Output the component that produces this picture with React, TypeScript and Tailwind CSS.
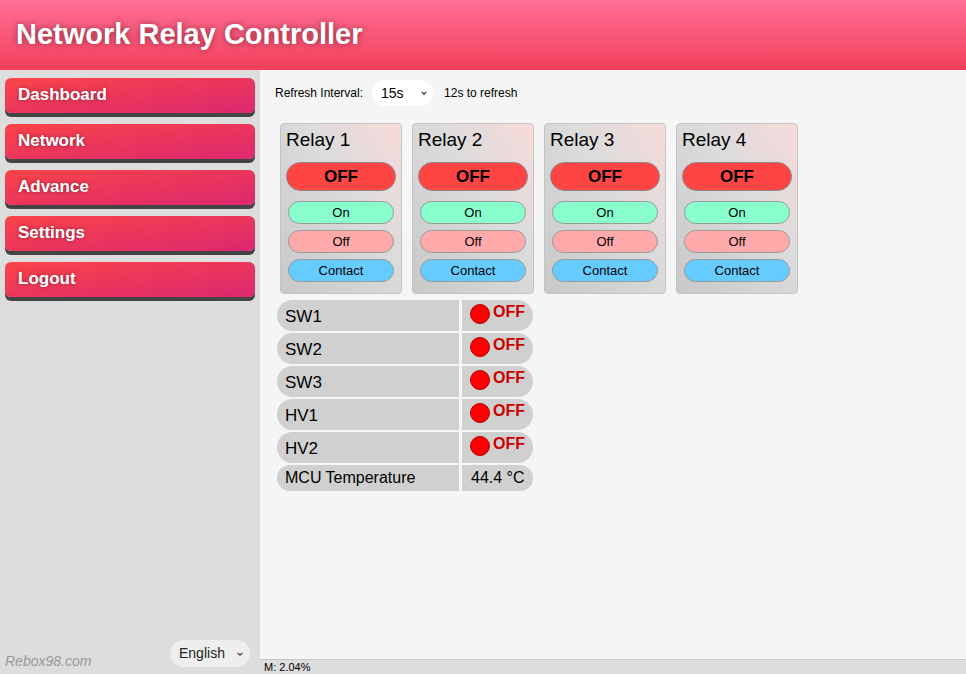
import React from "react";

const navItems = ["Dashboard", "Network", "Advance", "Settings", "Logout"];
const relays = ["Relay 1", "Relay 2", "Relay 3", "Relay 4"];
const inputs = ["SW1", "SW2", "SW3", "HV1", "HV2"];

const Chevron = () => (
  <svg width="8" height="8" viewBox="0 0 10 10" className="ml-auto">
    <path d="M2 3.5 L5 6.5 L8 3.5" fill="none" stroke="#333" strokeWidth="1.4" />
  </svg>
);

const RelayCard = ({ name }: { name: string }) => (
  <div className="w-[122px] h-[171px] rounded-[4px] border border-[#c4c4c4] bg-[linear-gradient(to_bottom_left,#f8dada_0%,#dcdcdc_40%,#c8c8c8_100%)] px-[5px] pt-[2px] flex flex-col">
    <div className="text-[19px] leading-[28px] text-black">{name}</div>
    <button className="mt-[8px] h-[29px] w-[110px] rounded-full border border-[#888] bg-[#ff4444] text-[17px] font-bold text-black">
      OFF
    </button>
    <div className="mt-[10px] flex flex-col gap-[6px] items-center">
      <button className="h-[23px] w-[106px] rounded-full border border-[#999] bg-[#88ffcc] text-[13px]">On</button>
      <button className="h-[23px] w-[106px] rounded-full border border-[#999] bg-[#ffaaaa] text-[13px]">Off</button>
      <button className="h-[23px] w-[106px] rounded-full border border-[#999] bg-[#66ccff] text-[13px]">Contact</button>
    </div>
  </div>
);

export default function App() {
  return (
    <div className="h-[674px] flex flex-col font-['Liberation_Sans',Arial,sans-serif] text-black overflow-hidden">
      <header className="h-[70px] shrink-0 bg-[linear-gradient(to_bottom,#ff6e97,#f2405a)] flex items-center pl-[16px]">
        <h1 className="text-[29px] font-bold text-white [text-shadow:0_0_6px_rgba(0,0,0,0.45)]">
          Network Relay Controller
        </h1>
      </header>

      <div className="flex flex-1 min-h-0">
        <aside className="w-[260px] shrink-0 bg-[#dddddd] flex flex-col px-[5px] pt-[8px]">
          <nav className="flex flex-col gap-[11px]">
            {navItems.map((item) => (
              <div
                key={item}
                className="h-[35px] rounded-[6px] bg-[linear-gradient(to_bottom_right,#fa4448,#dc2870)] shadow-[0_4px_0_#444] pl-[13px] pb-[2px] flex items-center text-[17px] font-bold text-white [text-shadow:0_0_4px_rgba(0,0,0,0.4)]"
              >
                {item}
              </div>
            ))}
          </nav>
          <div className="mt-auto flex items-end justify-between pb-[5px]">
            <span className="text-[14px] leading-[16px] italic text-[#999]">Rebox98.com</span>
            <div className="w-[80px] h-[27px] mb-[2px] mr-[5px] rounded-full bg-[#eeeeee] flex items-center pl-[9px] pr-[6px] text-[14px] text-[#222]">
              English
              <Chevron />
            </div>
          </div>
        </aside>

        <main className="flex-1 bg-[#f5f5f5] flex flex-col">
          <div className="flex-1 pl-[15px] pt-[10px]">
            <div className="flex items-center text-[12px]">
              <span>Refresh Interval:</span>
              <div className="ml-[9px] w-[61px] h-[26px] rounded-full bg-white flex items-center pl-[9px] pr-[5px] text-[14px]">
                15s
                <Chevron />
              </div>
              <span className="ml-[11px]">12s to refresh</span>
            </div>

            <div className="mt-[17px] ml-[5px] flex gap-[10px]">
              {relays.map((r) => (
                <RelayCard key={r} name={r} />
              ))}
            </div>

            <div className="mt-[6px] ml-[2px] flex flex-col gap-[2px] w-[256px]">
              {inputs.map((name) => (
                <div key={name} className="flex gap-[3px] h-[31px]">
                  <div className="w-[182px] rounded-l-full bg-[#d0d0d0] pl-[8px] flex items-center text-[17px] pt-[2px]">
                    {name}
                  </div>
                  <div className="flex-1 rounded-r-full bg-[#d0d0d0] flex items-start pl-[8px] pt-[3px]">
                    <span className="mt-[1px] w-[20px] h-[20px] rounded-full bg-[#ff0000] border border-[#b00000]" />
                    <span className="ml-[3px] text-[16px] font-bold text-[#cc0000] leading-[18px]">OFF</span>
                  </div>
                </div>
              ))}
              <div className="flex gap-[3px] h-[26px]">
                <div className="w-[182px] rounded-l-full bg-[#d0d0d0] pl-[8px] flex items-center text-[16px]">
                  MCU Temperature
                </div>
                <div className="flex-1 rounded-r-full bg-[#d0d0d0] flex items-center pl-[9px] text-[16px]">
                  44.4 °C
                </div>
              </div>
            </div>
          </div>

          <div className="h-[15px] shrink-0 border-t border-[#c8c8c8] bg-[#dddddd] pl-[4px] text-[11px] leading-[14px]">
            M: 2.04%
          </div>
        </main>
      </div>
    </div>
  );
}
